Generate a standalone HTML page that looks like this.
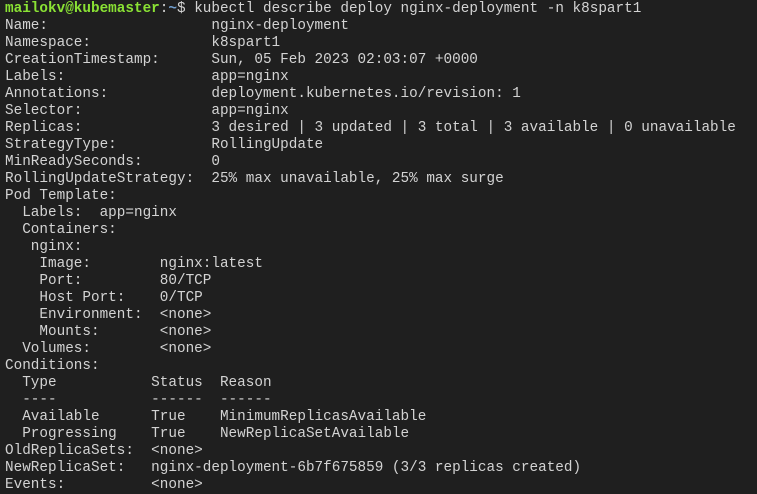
<html><head><style>
body{margin:0;background:#1f1f1f;width:757px;height:493px;overflow:hidden}
pre{margin:0;padding:1px 0 0 5px;font-family:"Liberation Mono",monospace;font-size:14.33px;line-height:17px;color:#d3d3d3;position:relative;top:0}
.g{color:#8ae234;font-weight:bold}.b{color:#729fcf;font-weight:bold}
</style></head><body><pre><span class="g">mailokv@kubemaster</span>:<span class="b">~</span>$ kubectl describe deploy nginx-deployment -n k8spart1
Name:                   nginx-deployment
Namespace:              k8spart1
CreationTimestamp:      Sun, 05 Feb 2023 02:03:07 +0000
Labels:                 app=nginx
Annotations:            deployment.kubernetes.io/revision: 1
Selector:               app=nginx
Replicas:               3 desired | 3 updated | 3 total | 3 available | 0 unavailable
StrategyType:           RollingUpdate
MinReadySeconds:        0
RollingUpdateStrategy:  25% max unavailable, 25% max surge
Pod Template:
  Labels:  app=nginx
  Containers:
   nginx:
    Image:        nginx:latest
    Port:         80/TCP
    Host Port:    0/TCP
    Environment:  &lt;none&gt;
    Mounts:       &lt;none&gt;
  Volumes:        &lt;none&gt;
Conditions:
  Type           Status  Reason
  ----           ------  ------
  Available      True    MinimumReplicasAvailable
  Progressing    True    NewReplicaSetAvailable
OldReplicaSets:  &lt;none&gt;
NewReplicaSet:   nginx-deployment-6b7f675859 (3/3 replicas created)
Events:          &lt;none&gt;</pre></body></html>
